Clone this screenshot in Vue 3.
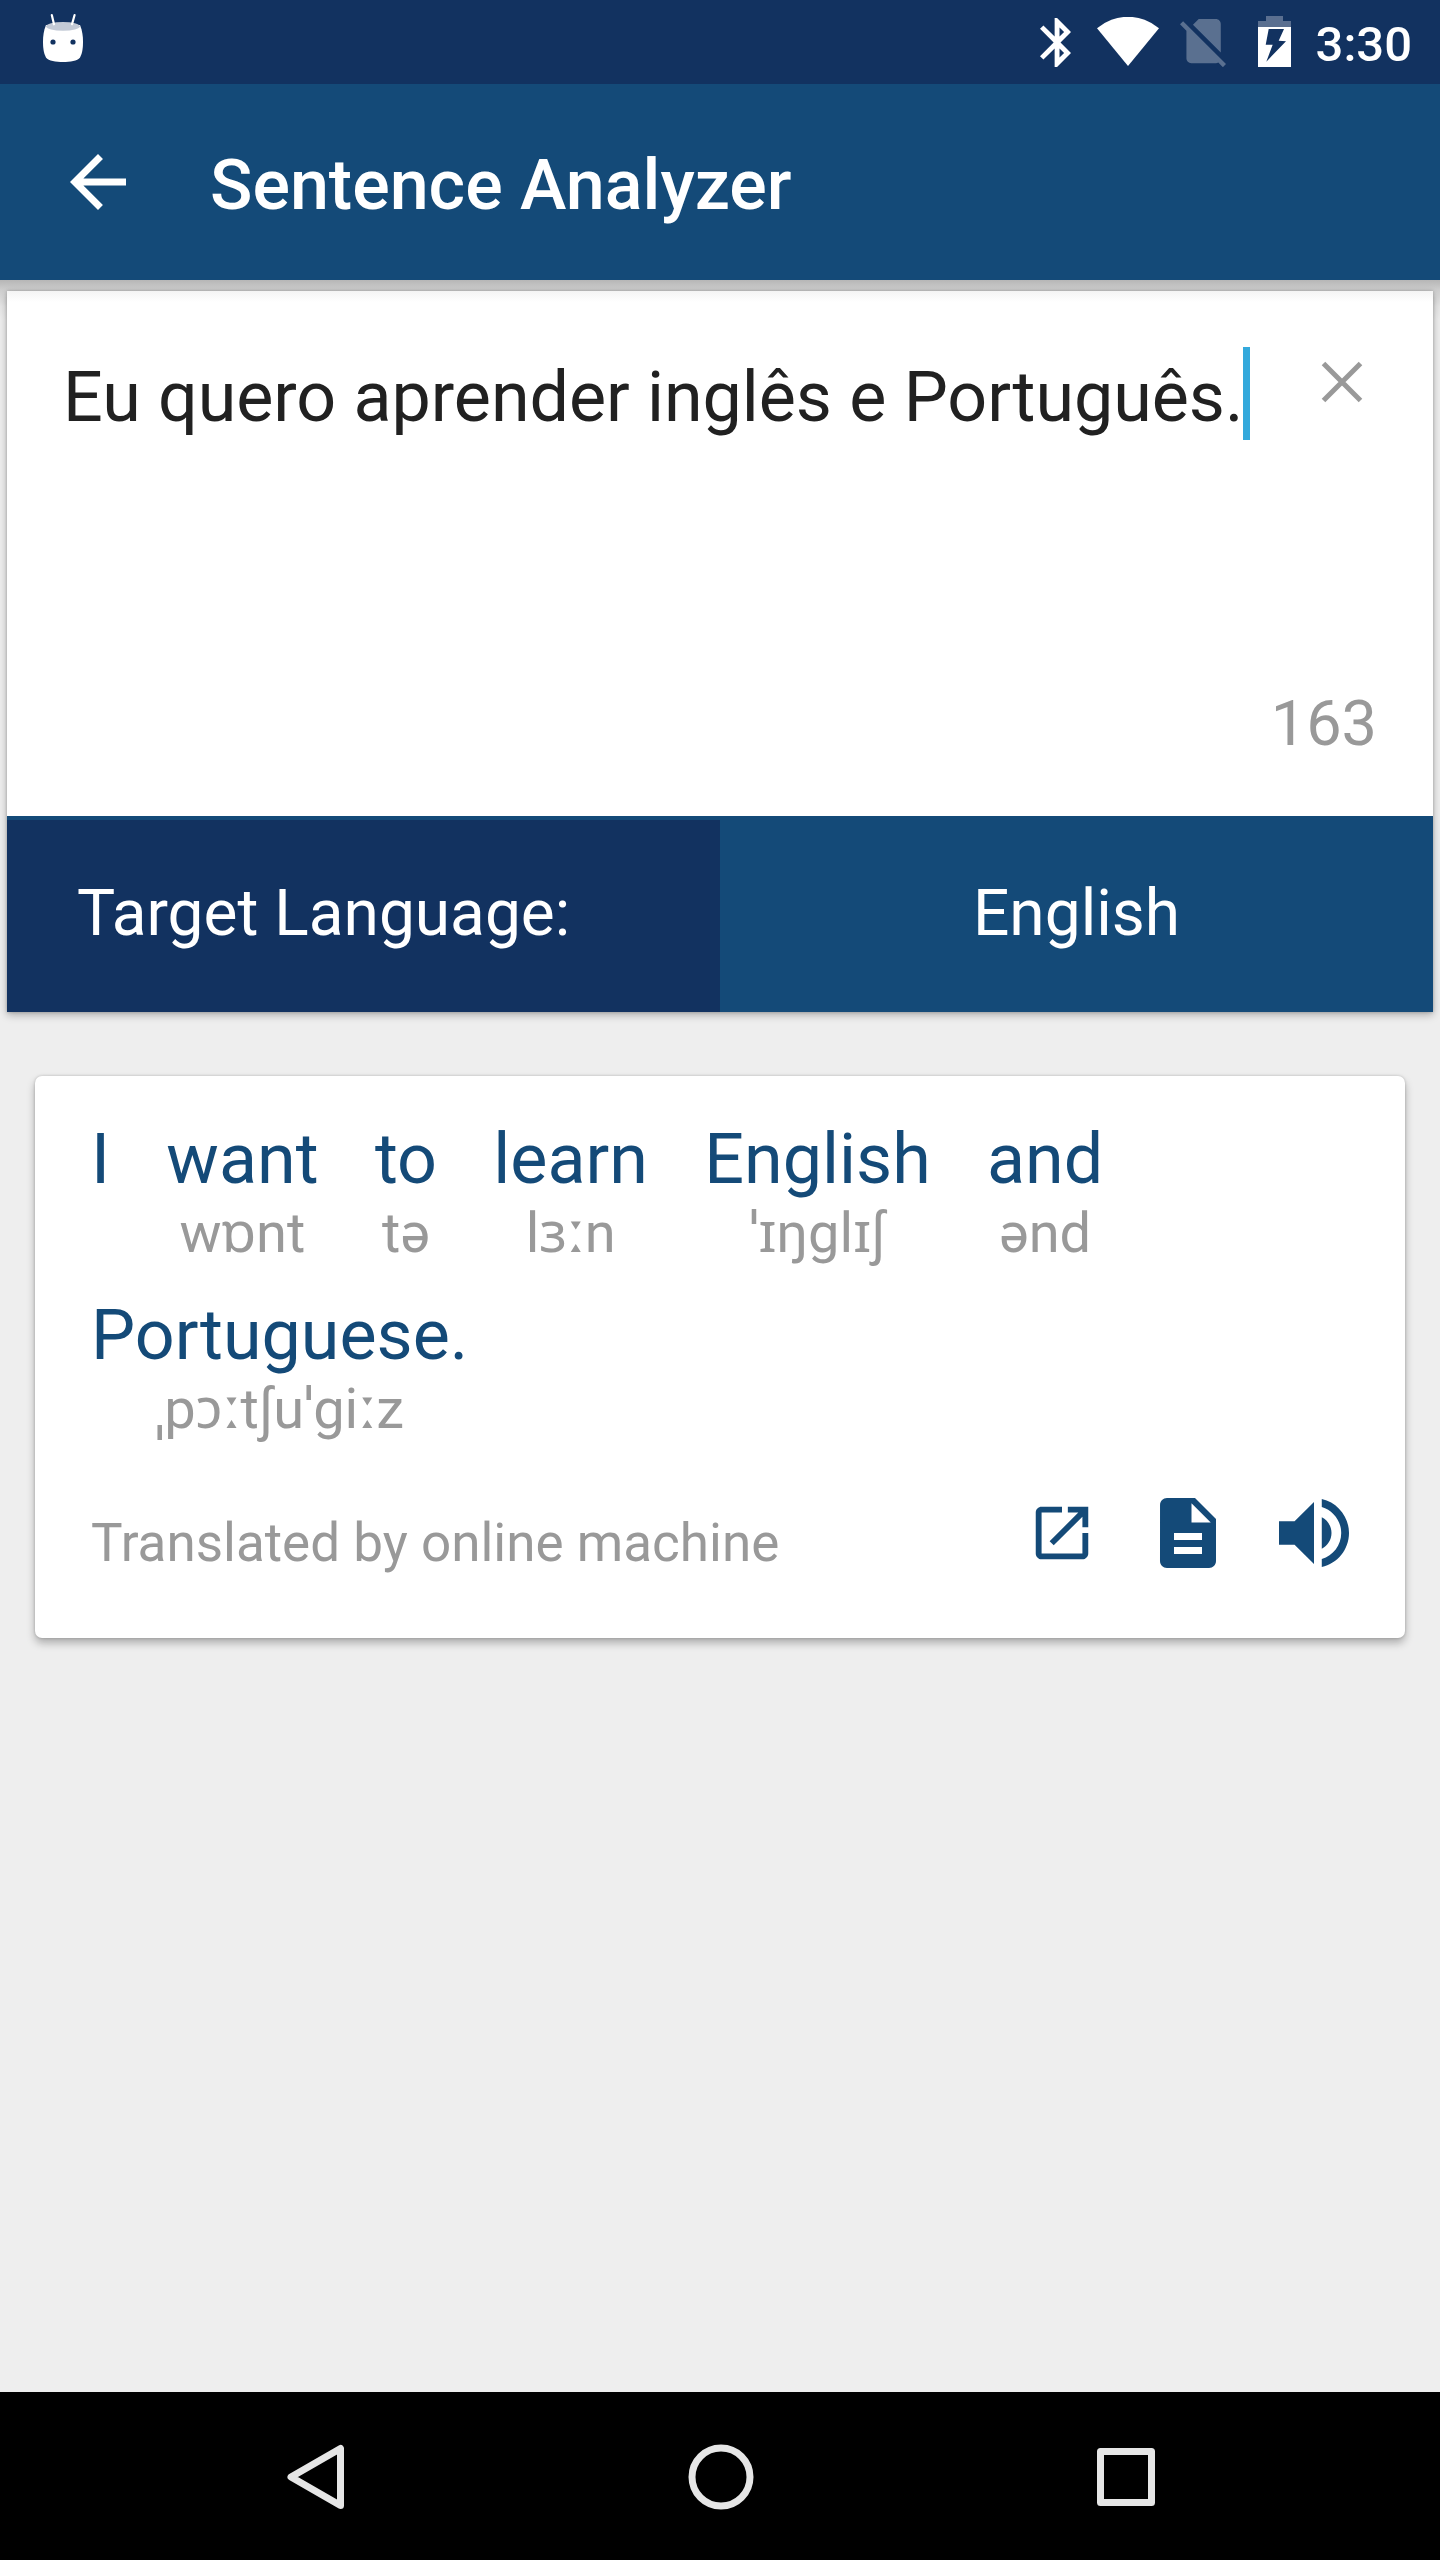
<template>
  <div class="screen">
    <div class="status-bar">
      <svg class="robot" width="42" height="50" viewBox="0 0 42 50">
        <path d="M4 13C1.6 19 1 24 1 29.500C1 37 2 42 4 45.500C6.500 49 14 50 21 50S35.500 49 38 45.500C40 42 41 37 41 29.500C41 24 40.400 19 38 13Z" fill="#fff" />
        <ellipse cx="21" cy="14.300" rx="16.900" ry="4.400" fill="#c3cad6" />
        <path d="M9.800 3L12 12.300M32.600 3L30 12.300" stroke="#fff" stroke-width="2.200" stroke-linecap="round" />
        <circle cx="11" cy="30" r="2.600" fill="#123260" />
        <circle cx="31" cy="30" r="2.600" fill="#123260" />
      </svg>

      <div class="status-icons">
        <svg class="bluetooth" width="31" height="49" viewBox="5 2 12.710 20" fill="#fff">
          <path d="M17.710 7.710L12 2h-1v7.590L6.410 5 5 6.410 10.590 12 5 17.590 6.410 19 11 14.410V22h1l5.710-5.710-4.300-4.290 4.300-4.290zM13 5.830l1.880 1.880L13 9.590V5.830zm1.880 10.460L13 18.170v-3.760l1.880 1.880z" />
        </svg>
        <svg class="wifi" width="62" height="49" viewBox="0 0 62 49" fill="#fff">
          <path d="M0 11.300A47.500 47.500 0 0 1 62 11.300L31 49Z" />
        </svg>
        <svg class="no-sim" width="46" height="48.200" viewBox="2.380 3 18.740 19.620" fill="#fff">
          <path d="M18.990 5c0-1.100-.890-2-1.990-2h-7L7.660 5.340 19 16.680 18.990 5zM3.650 3.880L2.380 5.150 5 7.770V19c0 1.100.900 2 2 2h10.010c.350 0 .670-.100.960-.260l1.880 1.880 1.270-1.270L3.650 3.880z" />
        </svg>
        <svg class="battery" width="33" height="51" viewBox="0 0 33 51">
          <path d="M8 0H25V5H33V11H0V5H8Z" fill="#5a6f90" />
          <path d="M0 11H33V51H0Z" fill="#fff" />
          <path d="M10.700 13H26L20.700 24.700L28 25.300L8.300 45.700L14.700 28.700H7.700Z" fill="#123260" />
        </svg>
        <span class="clock">3:30</span>
      </div>
    </div>

    <header class="app-bar">
      <svg class="back" width="84" height="84" viewBox="0 0 24 24" fill="#fff">
        <path d="M20 11H7.830l5.590-5.590L12 4l-8 8 8 8 1.410-1.410L7.830 13H20v-2z" />
      </svg>
      <h1>Sentence Analyzer</h1>
    </header>

    <main class="content">
      <section class="input-card">
        <div class="editor">
          <div class="editor-row">
            <div class="sentence">{{ sentence }}<span class="caret"></span></div>
            <svg class="clear" width="42" height="42" viewBox="0 0 42 42">
              <path d="M2.500 2.500L39.500 39.500M39.500 2.500L2.500 39.500" stroke="#999" stroke-width="5" />
            </svg>
          </div>
          <div class="counter">{{ remaining }}</div>
        </div>
        <div class="language-row">
          <div class="language-label">Target Language:</div>
          <div class="language-value">{{ language }}</div>
        </div>
      </section>

      <section class="result-card">
        <div class="words">
          <div v-for="w in words" :key="w.text" class="word">
            <div class="text">{{ w.text }}</div>
            <div class="ipa">{{ w.ipa }}</div>
          </div>
        </div>
        <div class="result-footer">
          <span class="source">Translated by online machine</span>
          <div class="actions">
            <svg width="70" height="70" viewBox="0 0 24 24">
              <path d="M19 19H5V5h7V3H5c-1.110 0-2 .900-2 2v14c0 1.100.890 2 2 2h14c1.100 0 2-.900 2-2v-7h-2v7zM14 3v2h3.590l-9.830 9.830 1.410 1.410L19 6.410V10h2V3h-7z" />
            </svg>
            <svg width="84" height="84" viewBox="0 0 24 24">
              <path d="M14 2H6c-1.100 0-1.990.900-1.990 2L4 20c0 1.100.890 2 1.990 2H18c1.100 0 2-.900 2-2V8l-6-6zm2 16H8v-2h8v2zm0-4H8v-2h8v2zm-3-5V3.500L18.500 9H13z" />
            </svg>
            <svg width="70" height="70" viewBox="3 3 18 18">
              <path d="M3 9v6h4l5 5V4L7 9H3zm13.500 3c0-1.770-1.020-3.290-2.500-4.030v8.050c1.480-.730 2.500-2.250 2.500-4.020zM14 3.230v2.060c2.890.860 5 3.540 5 6.710s-2.110 5.850-5 6.710v2.060c4.010-.910 7-4.490 7-8.770s-2.990-7.860-7-8.770z" />
            </svg>
          </div>
        </div>
      </section>
    </main>

    <nav class="nav-bar">
      <svg width="66" height="66" viewBox="0 0 66 66">
        <path d="M57.500 4.500V61.500L8 33Z" />
      </svg>
      <svg width="66" height="66" viewBox="0 0 66 66">
        <circle cx="33" cy="33" r="29" />
      </svg>
      <svg width="66" height="66" viewBox="0 0 66 66">
        <rect x="7.500" y="7.500" width="51" height="51" />
      </svg>
    </nav>
  </div>
</template>

<script setup>
import { ref } from "vue";

const sentence = ref("Eu quero aprender inglês e Português.");
const remaining = ref(163);
const language = ref("English");

const words = [
  { text: "I", ipa: "" },
  { text: "want", ipa: "wɒnt" },
  { text: "to", ipa: "tə" },
  { text: "learn", ipa: "lɜːn" },
  { text: "English", ipa: "ˈɪŋglɪʃ" },
  { text: "and", ipa: "ənd" },
  { text: "Portuguese.", ipa: "ˌpɔːtʃuˈgiːz" },
];
</script>

<style>
body { margin:0; background:#eee; }
</style>

<style scoped>
.screen { width:1440px; height:2560px; display:flex; flex-direction:column; overflow:hidden; background:#eee; font-family:Roboto, "Noto Sans", sans-serif; }
svg { display:block; flex:none; }

.status-bar { height:84px; flex:none; box-sizing:border-box; padding:0 28px 0 42px; display:flex; justify-content:space-between; background:#123260; }
.robot { margin-top:12px; }
.status-icons { display:flex; align-items:flex-start; }
.bluetooth { margin-top:18px; }
.wifi { margin:17px 0 0 26px; }
.no-sim { margin:19px 0 0 21px; opacity:.3; }
.battery { margin:16px 0 0 32px; }
.clock { margin-left:25px; color:#fff; font-size:49px; font-weight:500; line-height:89px; }

.app-bar { height:196px; flex:none; box-sizing:border-box; padding:0 56px; display:flex; align-items:center; background:#144a78; color:#fff; }
h1 { margin:6px 0 0 70px; font-size:70px; font-weight:500; line-height:82px; }

.content { flex:1; padding:11px 7px 0; background:linear-gradient(#b6b6b6, #cecece 10px, #e6e6e6 26px, #eee 40px); }

.input-card { box-shadow:0 3px 8px rgba(0,0,0,.28), 0 0 3px rgba(0,0,0,.2); background:#fff; }
.editor { height:525px; box-sizing:border-box; padding:56px 56px 55px; display:flex; flex-direction:column; justify-content:space-between; background:linear-gradient(#f4f4f4, #fff 11px); }
.editor-row { display:flex; justify-content:space-between; }
.sentence { height:93px; display:flex; align-items:center; padding-top:6px; box-sizing:border-box; font-size:70px; line-height:82px; letter-spacing:-.05px; color:#212121; white-space:nowrap; }
.caret { width:7px; height:93px; margin-top:-6px; background:#33a9dc; }
.clear { margin:14px 14px 0 0; }
.counter { align-self:flex-end; font-size:63px; line-height:74px; color:#999; }

.language-row { display:grid; grid-template-columns:1fr 1fr; height:196px; box-sizing:border-box; border-top:4px solid #144a78; color:#fff; font-size:64px; line-height:188px; background:#144a78; }
.language-label { padding-left:70px; background:#123260; }
.language-value { text-align:center; }

.result-card { height:562px; box-sizing:border-box; margin:64px 28px 0; padding:42px 56px 0; background:#fff; border-radius:7px; box-shadow:0 5px 9px rgba(0,0,0,.28), 0 0 3px rgba(0,0,0,.2); }
.words { display:flex; flex-wrap:wrap; gap:28px 56.3px; padding-right:150px; }
.word { height:148px; text-align:center; }
.text { font-size:70px; line-height:82px; color:#144a78; }
.ipa { height:66px; font-size:56px; line-height:66px; color:#999; }
.result-footer { display:flex; align-items:center; justify-content:space-between; margin-top:49px; }
.source { font-size:53px; padding-top:20px; color:#999; }
.actions { display:flex; align-items:center; gap:49px; fill:#144a78; }

.nav-bar { height:168px; flex:none; box-sizing:border-box; padding:1px 281px 0 283px; display:flex; align-items:center; justify-content:space-between; background:#000; }
.nav-bar svg { fill:none; stroke:#e6e6e6; stroke-width:7; stroke-linejoin:round; }
</style>
